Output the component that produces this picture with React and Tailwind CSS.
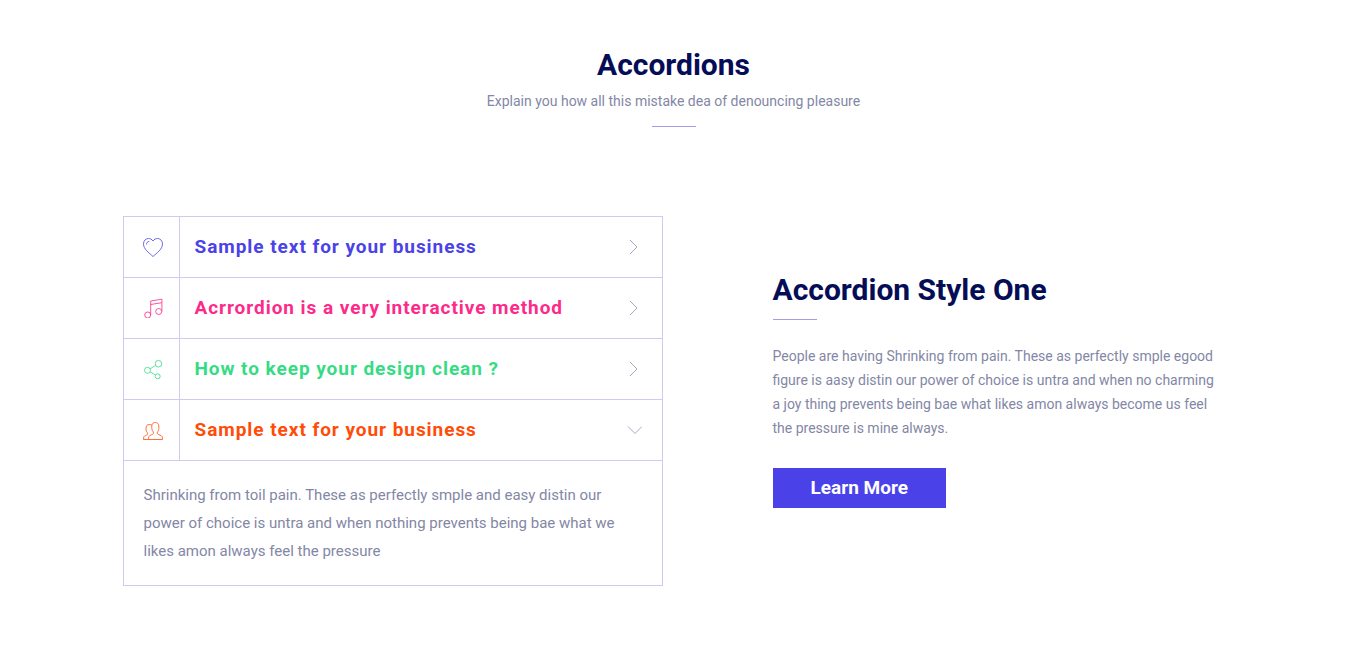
import { useState } from "react";

function HeartIcon() {
  return (
    <>
      <path d="M10 4C8.700 2.200 7.200 1.500 5.500 1.500C2.700 1.500 .5 3.800 .5 6.800C.5 12.300 6 15.800 10 19.500C14 15.800 19.500 12.300 19.500 6.800C19.500 3.800 17.300 1.500 14.500 1.500C12.800 1.500 11.300 2.200 10 4Z" />
      <path d="M3.500 7.500C3.500 5.700 4.600 4.500 6.300 4.500" />
    </>
  );
}

function MusicIcon() {
  return (
    <>
      <circle cx="4.700" cy="17" r="3" />
      <circle cx="15.700" cy="13.500" r="3" />
      <path d="M7.700 17V3L18.900 1.200V13.500M7.700 6.500L18.900 4.700" />
    </>
  );
}

function ShareIcon() {
  return (
    <>
      <circle cx="15.500" cy="4.700" r="3.300" />
      <circle cx="4.500" cy="11.300" r="3" />
      <circle cx="14.700" cy="17.300" r="2.500" />
      <path d="M7.100 9.800L12.700 6.400M7.100 12.800L12.500 16" />
    </>
  );
}

function UsersIcon() {
  return (
    <>
      <path d="M5.500 19.500H19.500C19.500 16.500 18.900 15.800 17 15.100C15.300 14.500 14.300 14.200 14.300 13V12C15.300 11.200 15.700 9.900 15.800 8.500C16.100 4.300 15 2.500 12.300 2.500C9.600 2.500 8.500 4.300 8.800 8.500C8.900 9.900 9.400 11.200 10.400 12V13C10.400 14.200 9.400 14.500 7.800 15.100C6 15.800 5.500 16.500 5.500 19.500Z" />
      <path d="M5.500 19.500H.5C.5 16.800 1 16 2.600 15.500C4 15 4.700 14.700 4.700 13.700V13C3.500 12 3 10.800 3 9C2.900 5.900 4 4.500 6.300 4.500C7.400 4.500 8.200 4.700 8.900 5.300" />
    </>
  );
}

const answer =
  "Shrinking from toil pain. These as perfectly smple and easy distin our power of choice is untra and when nothing prevents being bae what we likes amon always feel the pressure";

const items = [
  { title: "Sample text for your business", color: "text-[#4a42e8]", Icon: HeartIcon },
  { title: "Acrrordion is a very interactive method", color: "text-[#fc2a88]", Icon: MusicIcon },
  { title: "How to keep your design clean ?", color: "text-[#35dc84]", Icon: ShareIcon },
  { title: "Sample text for your business", color: "text-[#ff4c07]", Icon: UsersIcon },
];

function AccordionItem({ id, item, open, onToggle }) {
  const { title, color, Icon } = item;
  return (
    <div className="border-b border-[#cfcaf2]">
      <h3>
        <button
          type="button"
          id={`${id}-button`}
          aria-expanded={open}
          aria-controls={`${id}-panel`}
          onClick={onToggle}
          className={`flex h-15 w-full cursor-pointer items-center text-left ${color}`}
        >
          <span className="flex h-full w-14 shrink-0 items-center border-r border-[#cfcaf2] pl-[19px]">
            <svg className="size-5" viewBox="0 0 20 20" fill="none" stroke="currentColor" strokeWidth="0.8" aria-hidden="true">
              <Icon />
            </svg>
          </span>
          <span className="flex-1 pl-[15px] text-[19px] leading-7 font-bold tracking-wider">{title}</span>
          <svg className="mr-5 size-4 shrink-0 text-[#a9a9c4]" viewBox="0 0 16 16" fill="none" stroke="currentColor" strokeWidth="1" aria-hidden="true">
            {open ? <path d="M2 4.500L9 11.500L16 4.500" /> : <path d="M4 1L11 8L4 15" />}
          </svg>
        </button>
      </h3>
      {open && (
        <div
          id={`${id}-panel`}
          role="region"
          aria-labelledby={`${id}-button`}
          className="border-t border-[#cfcaf2] px-5 py-5 text-[15px] leading-7"
        >
          {answer}
        </div>
      )}
    </div>
  );
}

export default function App() {
  const [openIndex, setOpenIndex] = useState(3);

  return (
    <main className="bg-white px-5 pt-[45px] pb-16 font-['Roboto',sans-serif] text-[#8387a5]">
      <div className="mx-auto max-w-[1102px]">
        <header className="flex flex-col items-center text-center">
          <h1 className="text-3xl leading-10 font-bold text-[#040d56]">Accordions</h1>
          <p className="mt-1 text-sm leading-6">Explain you how all this mistake dea of denouncing pleasure</p>
          <span className="mt-[13px] h-px w-11 bg-[#a79ceb]" />
        </header>

        <div className="mt-[89px] grid gap-x-[110px] gap-y-10 lg:grid-cols-[minmax(0,540px)_minmax(0,1fr)]">
          <div className="self-start border-x border-t border-[#cfcaf2]">
            {items.map((item, index) => (
              <AccordionItem
                key={index}
                id={`item-${index}`}
                item={item}
                open={openIndex === index}
                onToggle={() => setOpenIndex(openIndex === index ? -1 : index)}
              />
            ))}
          </div>

          <section className="lg:pt-14">
            <h2 className="text-3xl font-bold text-[#040d56]">Accordion Style One</h2>
            <div className="mt-[11px] h-px w-11 bg-[#a79ceb]" />
            <p className="mt-6 text-sm leading-6">
              People are having Shrinking from pain. These as perfectly smple egood figure is aasy distin our power of
              choice is untra and when no charming a joy thing prevents being bae what likes amon always become us feel
              the pressure is mine always.
            </p>
            <a
              href="#learn-more"
              className="mt-7 inline-flex h-10 items-center bg-[#4a42e8] px-[38px] text-[19px] leading-7 font-bold text-white"
            >
              Learn More
            </a>
          </section>
        </div>
      </div>
    </main>
  );
}
